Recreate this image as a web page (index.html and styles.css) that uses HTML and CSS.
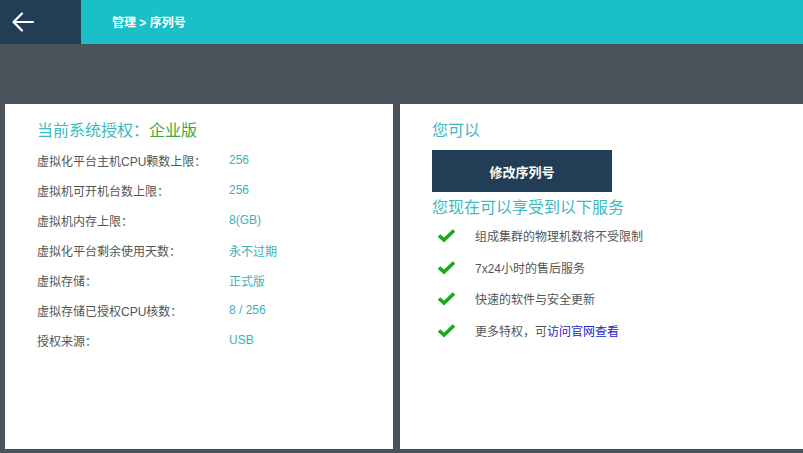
FILE: index.html
```html
<html>

<head>
	<meta charset="utf-8">
	<title>序列号</title>

	<link rel="stylesheet" href="styles.css">
</head>

<body>
	<div class="header">
		<div class="back">
			<svg width="24" height="24" viewBox="0 0 24 24">
				<path d="M22 12H3M11 3.5L2.5 12L11 20.5" fill="none" stroke="#fff" stroke-width="2.2" stroke-linecap="round" stroke-linejoin="round"/>
			</svg>
		</div>
		<div class="crumb">管理 &gt; 序列号</div>
	</div>

	<div class="main">
		<div class="panel left">
			<h2 class="title">当前系统授权：<span class="edition">企业版</span></h2>
			<table class="info">
				<tr><td class="label">虚拟化平台主机CPU颗数上限：</td><td class="value">256</td></tr>
				<tr><td class="label">虚拟机可开机台数上限：</td><td class="value">256</td></tr>
				<tr><td class="label">虚拟机内存上限：</td><td class="value">8(GB)</td></tr>
				<tr><td class="label">虚拟化平台剩余使用天数：</td><td class="value">永不过期</td></tr>
				<tr><td class="label">虚拟存储：</td><td class="value">正式版</td></tr>
				<tr><td class="label">虚拟存储已授权CPU核数：</td><td class="value">8 / 256</td></tr>
				<tr><td class="label">授权来源：</td><td class="value">USB</td></tr>
			</table>
		</div>

		<div class="panel right">
			<h2 class="title">您可以</h2>
			<button class="btn">修改序列号</button>
			<h2 class="title">您现在可以享受到以下服务</h2>
			<ul class="services">
				<li><span class="check"><svg width="19" height="15" viewBox="0 0 19 15"><path d="M2 7.5L7 12L17 2.5" fill="none" stroke="#1aaa1a" stroke-width="3.6"/></svg></span>组成集群的物理机数将不受限制</li>
				<li><span class="check"><svg width="19" height="15" viewBox="0 0 19 15"><path d="M2 7.5L7 12L17 2.5" fill="none" stroke="#1aaa1a" stroke-width="3.6"/></svg></span>7x24小时的售后服务</li>
				<li><span class="check"><svg width="19" height="15" viewBox="0 0 19 15"><path d="M2 7.5L7 12L17 2.5" fill="none" stroke="#1aaa1a" stroke-width="3.6"/></svg></span>快速的软件与安全更新</li>
				<li><span class="check"><svg width="19" height="15" viewBox="0 0 19 15"><path d="M2 7.5L7 12L17 2.5" fill="none" stroke="#1aaa1a" stroke-width="3.6"/></svg></span>更多特权，可<a href="#">访问官网查看</a></li>
			</ul>
		</div>
	</div>
</body>

</html>
```

FILE: styles.css
```css
body {
	margin: 0;
	background-color: #4a525c;
	font-family: "Liberation Sans", "Noto Sans CJK SC", sans-serif;
	font-size: 12px;
	color: #555;
	overflow: hidden;
}

.header {
	display: flex;
	height: 44px;
}

.back {
	width: 81px;
	background-color: #213e56;
	display: flex;
	align-items: center;
	padding-left: 11px;
	box-sizing: border-box;
}

.crumb {
	flex: 1;
	background-color: #19c0c8;
	color: #fff;
	font-weight: bold;
	padding-left: 31px;
	line-height: 46px;
}

.main {
	display: flex;
	gap: 7px;
	padding: 60px 0 0 5px;
	height: 345px;
}

.panel {
	background-color: #fff;
	box-sizing: border-box;
}

.left {
	width: 388px;
	padding: 15px 0 0 32px;
}

.right {
	flex: 1;
	padding: 15px 0 0 32px;
}

.title {
	margin: 0;
	font-size: 16px;
	font-weight: normal;
	color: #3cb9c2;
	line-height: 24px;
}

.edition {
	color: #3aa83a;
}

.info {
	border-collapse: collapse;
	margin-top: 2px;
	font-family: inherit;
	font-size: 12px;
	color: #555;
}

.info td {
	padding: 0;
	height: 30px;
	white-space: nowrap;
}

.label {
	width: 192px;
}

.value {
	color: #3cb1b9;
}

.btn {
	display: block;
	width: 180px;
	height: 42px;
	margin: 7px 0 4px 0;
	border: 0;
	background-color: #213e56;
	color: #fff;
	font-family: inherit;
	font-size: 13px;
	font-weight: bold;
}

.services {
	list-style: none;
	margin: 0;
	padding: 0;
}

.services li {
	display: flex;
	align-items: center;
	height: 31.5px;
}

.check {
	width: 43px;
	padding-left: 5px;
	box-sizing: border-box;
	display: flex;
}

.services a {
	color: #2323c8;
	text-decoration: none;
}
```
